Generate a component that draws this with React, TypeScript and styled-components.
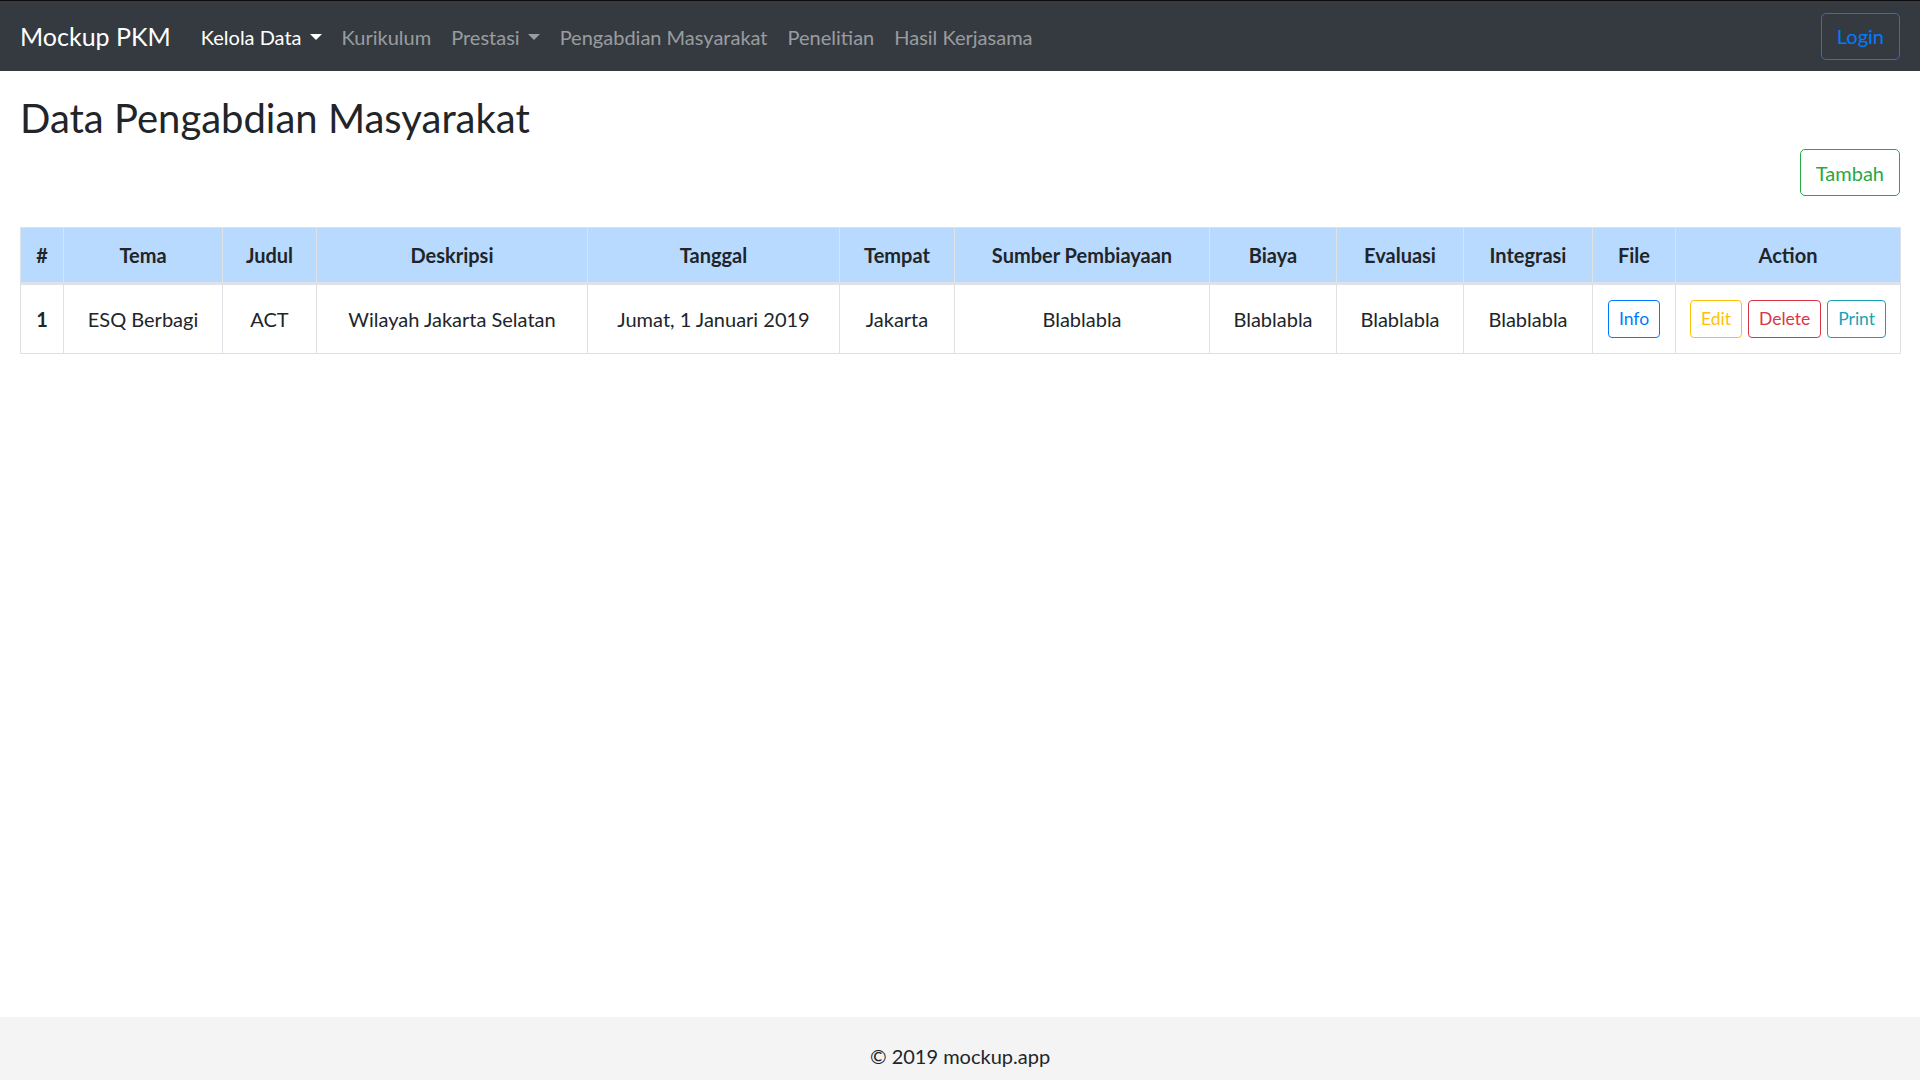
import React from "react";
import styled, { createGlobalStyle, css } from "styled-components";

const GlobalStyle = createGlobalStyle`
  * { box-sizing: border-box; }
  html, body { margin: 0; padding: 0; }
  body {
    font-family: "Segoe UI", Lato, "Open Sans", sans-serif;
    font-size: 20px;
    line-height: 1.5;
    color: #212529;
    background: #fff;
  }
`;

const Page = styled.div`
  display: flex;
  flex-direction: column;
  min-height: 100vh;
`;

const Navbar = styled.nav`
  display: flex;
  align-items: center;
  padding: 10px 20px;
  background: #343a40;
  border-top: 1px solid #0d0d0d;
`;

const Brand = styled.a`
  font-size: 25px;
  line-height: 37.5px;
  padding: 7px 0 5px;
  margin-right: 20px;
  color: #fff;
  text-decoration: none;
  white-space: nowrap;
`;

const NavList = styled.ul`
  display: flex;
  list-style: none;
  margin: 0;
  padding: 0;
`;

const NavLink = styled.a<{ $active?: boolean; $dropdown?: boolean }>`
  display: block;
  padding: 11px 10px 9px;
  line-height: 30px;
  color: ${(p) => (p.$active ? "#fff" : "rgba(255,255,255,0.5)")};
  text-decoration: none;
  white-space: nowrap;
  ${(p) =>
    p.$dropdown &&
    css`
      &::after {
        display: inline-block;
        margin-left: 0.4em;
        vertical-align: 0.255em;
        content: "";
        border-top: 0.3em solid;
        border-right: 0.3em solid transparent;
        border-left: 0.3em solid transparent;
        border-bottom: 0;
      }
    `}
`;

const Btn = styled.button<{ $color: string; $small?: boolean }>`
  display: inline-block;
  font-family: inherit;
  font-weight: 400;
  background: transparent;
  color: ${(p) => p.$color};
  border: 1px solid ${(p) => p.$color};
  cursor: pointer;
  white-space: nowrap;
  ${(p) =>
    p.$small
      ? css`
          font-size: 17.5px;
          line-height: 26px;
          padding: 5px 10px;
          border-radius: 4px;
        `
      : css`
          font-size: 20px;
          line-height: 30px;
          padding: 7.5px 15px;
          border-radius: 5px;
        `}
`;

const LoginBtn = styled(Btn)`
  margin-left: auto;
`;

const Main = styled.main`
  padding: 20px 20px 0;
`;

const Title = styled.h2`
  margin: 3px 0 7px;
  font-size: 40px;
  font-weight: 400;
  line-height: 1.2;
`;

const Toolbar = styled.div`
  display: flex;
  justify-content: flex-end;
  margin-bottom: 31px;
`;

const Table = styled.table`
  width: 100%;
  border-collapse: collapse;
  table-layout: fixed;
  border: 1px solid #dee2e6;
`;

const HeadCell = styled.th`
  background: #b8daff;
  border: 1px solid #dee2e6;
  border-bottom: 3px solid #dee2e6;
  padding: 12px 10px;
  font-weight: 700;
  text-align: center;
  vertical-align: middle;
  line-height: 30px;
  white-space: nowrap;
`;

const Cell = styled.td<{ $bold?: boolean }>`
  border: 1px solid #dee2e6;
  padding: 15px 10px;
  text-align: center;
  vertical-align: middle;
  line-height: 30px;
  white-space: nowrap;
  font-weight: ${(p) => (p.$bold ? 700 : 400)};
`;

const ActionGroup = styled.div`
  display: flex;
  justify-content: center;
  gap: 6px;
`;

const Footer = styled.footer`
  margin-top: auto;
  background: #f4f4f4;
  padding: 24px 0 9px;
  text-align: center;
  line-height: 30px;
`;

const columns: { label: string; width: number }[] = [
  { label: "#", width: 43 },
  { label: "Tema", width: 159 },
  { label: "Judul", width: 94 },
  { label: "Deskripsi", width: 271 },
  { label: "Tanggal", width: 252 },
  { label: "Tempat", width: 115 },
  { label: "Sumber Pembiayaan", width: 255 },
  { label: "Biaya", width: 127 },
  { label: "Evaluasi", width: 127 },
  { label: "Integrasi", width: 129 },
  { label: "File", width: 83 },
  { label: "Action", width: 225 },
];

const rows = [
  {
    no: "1",
    tema: "ESQ Berbagi",
    judul: "ACT",
    deskripsi: "Wilayah Jakarta Selatan",
    tanggal: "Jumat, 1 Januari 2019",
    tempat: "Jakarta",
    sumber: "Blablabla",
    biaya: "Blablabla",
    evaluasi: "Blablabla",
    integrasi: "Blablabla",
  },
];

export default function App() {
  return (
    <>
      <GlobalStyle />
      <Page>
        <Navbar>
          <Brand href="#">Mockup PKM</Brand>
          <NavList>
            <li>
              <NavLink href="#" $active $dropdown>
                Kelola Data
              </NavLink>
            </li>
            <li>
              <NavLink href="#">Kurikulum</NavLink>
            </li>
            <li>
              <NavLink href="#" $dropdown>
                Prestasi
              </NavLink>
            </li>
            <li>
              <NavLink href="#">Pengabdian Masyarakat</NavLink>
            </li>
            <li>
              <NavLink href="#">Penelitian</NavLink>
            </li>
            <li>
              <NavLink href="#">Hasil Kerjasama</NavLink>
            </li>
          </NavList>
          <LoginBtn $color="#007bff">Login</LoginBtn>
        </Navbar>

        <Main>
          <Title>Data Pengabdian Masyarakat</Title>
          <Toolbar>
            <Btn $color="#28a745">Tambah</Btn>
          </Toolbar>
          <Table>
            <colgroup>
              {columns.map((c) => (
                <col key={c.label} style={{ width: c.width }} />
              ))}
            </colgroup>
            <thead>
              <tr>
                {columns.map((c) => (
                  <HeadCell key={c.label}>{c.label}</HeadCell>
                ))}
              </tr>
            </thead>
            <tbody>
              {rows.map((r) => (
                <tr key={r.no}>
                  <Cell $bold>{r.no}</Cell>
                  <Cell>{r.tema}</Cell>
                  <Cell>{r.judul}</Cell>
                  <Cell>{r.deskripsi}</Cell>
                  <Cell>{r.tanggal}</Cell>
                  <Cell>{r.tempat}</Cell>
                  <Cell>{r.sumber}</Cell>
                  <Cell>{r.biaya}</Cell>
                  <Cell>{r.evaluasi}</Cell>
                  <Cell>{r.integrasi}</Cell>
                  <Cell>
                    <Btn $color="#007bff" $small>
                      Info
                    </Btn>
                  </Cell>
                  <Cell>
                    <ActionGroup>
                      <Btn $color="#ffc107" $small>
                        Edit
                      </Btn>
                      <Btn $color="#dc3545" $small>
                        Delete
                      </Btn>
                      <Btn $color="#17a2b8" $small>
                        Print
                      </Btn>
                    </ActionGroup>
                  </Cell>
                </tr>
              ))}
            </tbody>
          </Table>
        </Main>

        <Footer>© 2019 mockup.app</Footer>
      </Page>
    </>
  );
}
